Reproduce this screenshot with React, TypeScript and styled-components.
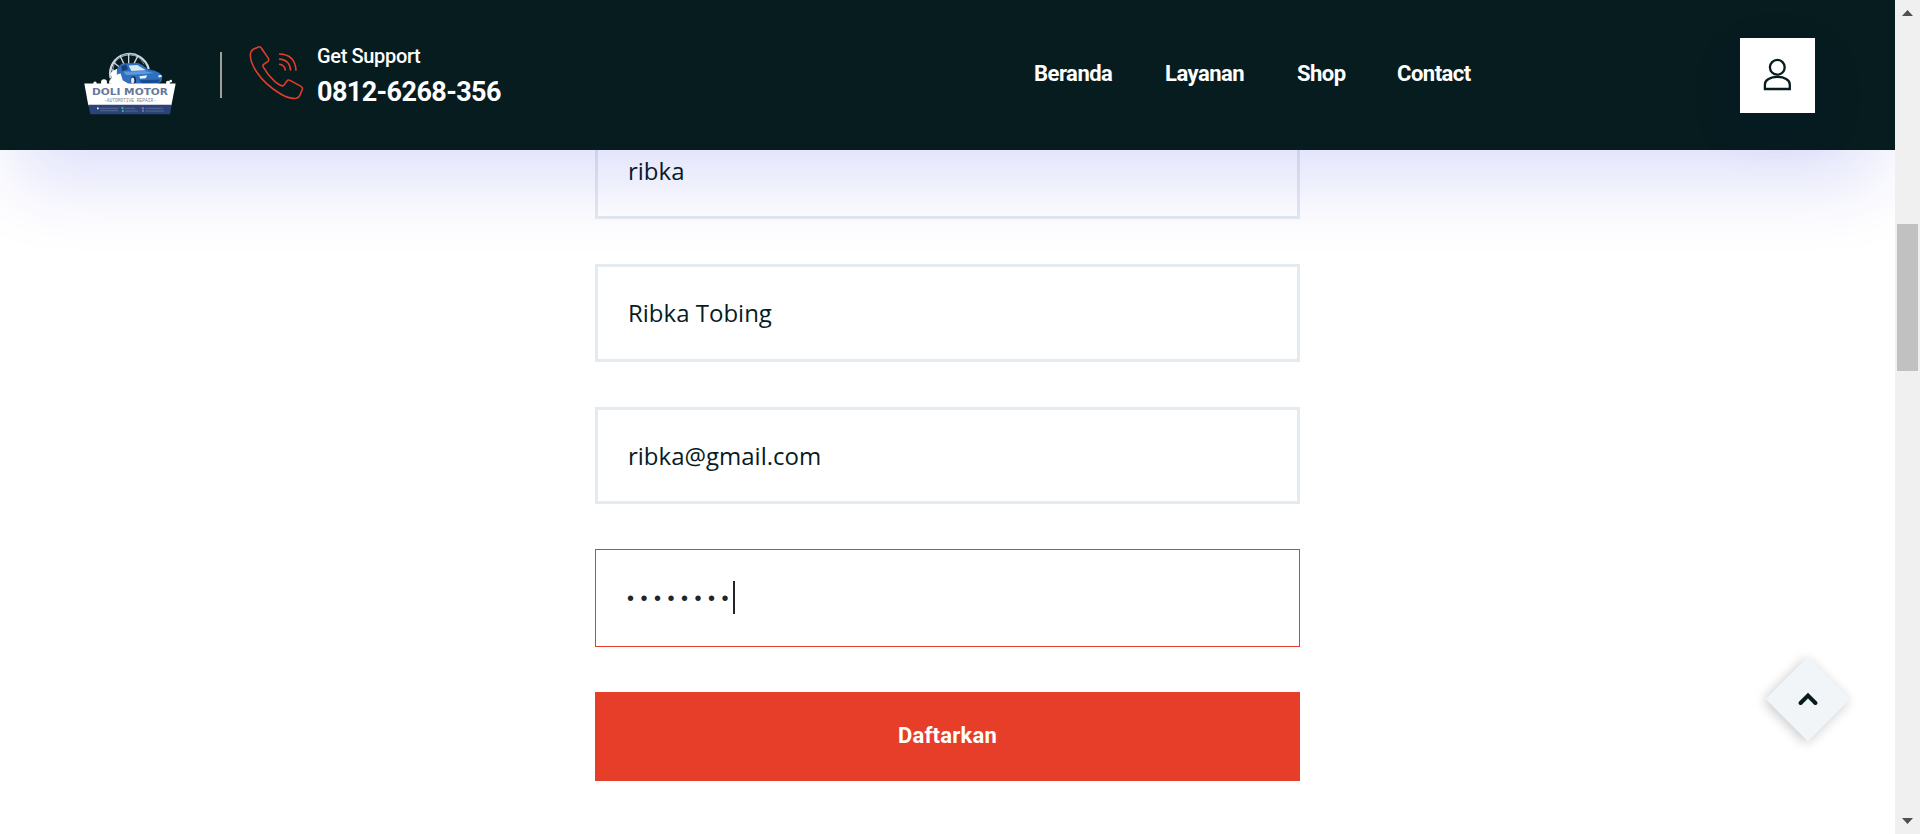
import React from 'react';
import styled, { createGlobalStyle } from 'styled-components';

const GlobalStyle = createGlobalStyle`
  *, *::before, *::after { box-sizing: border-box; }
  html, body { margin: 0; padding: 0; background: #fff; overflow: hidden; }
`;

const ink = '#071c1f';
const accent = '#e63e29';
const heading = `Roboto, "Liberation Sans", sans-serif`;

const Screen = styled.div`
  display: flex;
  width: 1920px;
  height: 834px;
  overflow: hidden;
`;

const Page = styled.div`
  position: relative;
  flex: 1;
  min-width: 0;
  overflow: hidden;
  background: #fff;
`;

const Header = styled.header`
  position: relative;
  z-index: 2;
  display: flex;
  align-items: flex-start;
  height: 150px;
  padding: 0 80px 0 84px;
  background: ${ink};
  box-shadow: 0 48px 75px -15px rgba(10, 14, 215, 0.13);
`;

const Logo = styled.svg`
  flex: none;
  width: 92px;
  height: 64px;
  margin-top: 51px;
`;

const Divider = styled.span`
  width: 2px;
  height: 46px;
  margin: 52px 26px 0 44px;
  background: #a19f9c;
`;

const PhoneIcon = styled.svg`
  flex: none;
  width: 54px;
  height: 56px;
  margin-top: 45px;
`;

const Support = styled.div`
  display: flex;
  flex-direction: column;
  margin: 44px 0 0 15px;
  width: 200px;
  color: #fff;
  font-family: ${heading};
  white-space: nowrap;
`;

const SupportLabel = styled.span`
  font-size: 20px;
  font-weight: 500;
  line-height: 24px;
  letter-spacing: -0.35px;
`;

const SupportNumber = styled.strong`
  margin-top: 8px;
  font-size: 27px;
  font-weight: 700;
  line-height: 32px;
  letter-spacing: -0.6px;
`;

const Nav = styled.nav`
  display: flex;
  gap: 52px;
  margin: 61px 0 0 517px;
`;

const NavLink = styled.a<{ $width: number }>`
  width: ${({ $width }) => $width}px;
  color: #fff;
  font: 700 22px/26px ${heading};
  letter-spacing: -0.5px;
  white-space: nowrap;
  text-decoration: none;
`;

const AccountButton = styled.button`
  display: flex;
  align-items: center;
  justify-content: center;
  width: 75px;
  height: 75px;
  margin: 38px 0 0 auto;
  padding: 0 0 4px;
  border: 0;
  background: #fff;
  box-shadow: 0 20px 60px rgba(10, 14, 120, 0.08);
`;

const Form = styled.form`
  display: flex;
  flex-direction: column;
  gap: 45px;
  width: 705px;
  margin: -29px 0 0 595px;
`;

const Field = styled.div<{ $height?: number; $active?: boolean; $drop?: number }>`
  display: flex;
  align-items: center;
  height: ${({ $height }) => $height ?? 98}px;
  padding: ${({ $drop }) => $drop ?? 0}px ${({ $active }) => ($active ? 32 : 30)}px 0;
  border: ${({ $active }) => ($active ? `1px solid ${accent}` : '3px solid #e4ebf0')};
  color: ${ink};
  font: 400 24px/36px "Open Sans", sans-serif;
`;

const Dots = styled.span`
  margin-left: -1px;
  font: 20px/30px "Liberation Sans", sans-serif;
  letter-spacing: 6.5px;
  color: #212529;
`;

const Caret = styled.span`
  width: 2px;
  height: 33px;
  margin: 0 0 1px -2px;
  background: #212529;
`;

const Submit = styled.button`
  height: 89px;
  padding: 0 0 2px;
  border: 0;
  background: ${accent};
  color: #fff;
  font: 700 22px/26px ${heading};
  letter-spacing: 0.2px;
`;

const ScrollTop = styled.a`
  position: absolute;
  left: 1778px;
  top: 669px;
  display: flex;
  align-items: center;
  justify-content: center;
  width: 60px;
  height: 60px;
  background: #f1f5f7;
  box-shadow: 0 3px 12px rgba(0, 0, 0, 0.22);
  transform: rotate(45deg);

  svg { transform: rotate(-45deg); }
`;

const Scrollbar = styled.div`
  display: flex;
  flex-direction: column;
  align-items: center;
  width: 25px;
  background: #f0f0f0;
`;

const Arrow = styled.svg`
  width: 11px;
  height: 6px;
  margin-top: 10px;
`;

const Thumb = styled.div`
  width: 21px;
  height: 147px;
  margin: 208px 0 auto;
  background: #c1c1c1;
`;

const ArrowDown = styled(Arrow)`
  margin: 0 0 10px;
`;

const links = [
  { label: 'Beranda', width: 79 },
  { label: 'Layanan', width: 80 },
  { label: 'Shop', width: 48 },
  { label: 'Contact', width: 73 },
];

function DoliLogo() {
  return (
    <Logo viewBox="42 64 276 193" preserveAspectRatio="none">
      <g fill="none" stroke="#cdd6df">
        <path d="M122 146A58 58 0 1 1 236 118" strokeWidth="7" />
        <path d="M132 140A47 47 0 0 1 222 104" stroke="#75879a" strokeWidth="3" />
        <path d="M176 72v32M150 78l14 30M130 98l28 22M204 78l-12 24M124 120l26 8" strokeWidth="4" />
      </g>
      <path d="M118 163c-3-12 6-14 8-20-8-10 0-22 8-19 3-10 14-6 17 2l18 38z" fill="#fff" />
      <path d="M144 112l12-10 44-2c16 2 24 12 32 18 22 4 40 10 45 22l-3 16-14 9-58 1-40-6-22-22c2-8-2-16 4-26z" fill="#2f6fbd" />
      <path d="M154 109l14-4 6 14-18 6z" fill="#173d74" />
      <path d="M176 108l26-2 26 16-44 2z" fill="#d5e6f6" />
      <path d="M160 126l26 0 38-2 28 6-34 4-50 2z" fill="#5a9ae0" />
      <path d="M208 140l24-3-5 9-16 2zM264 138l10-2 1 6-8 2z" fill="#eef7ff" />
      <path d="M208 152l62-2-4 10-50 3z" fill="#174a94" />
      <ellipse cx="190" cy="152" rx="8" ry="12" fill="#12294c" />
      <ellipse cx="188" cy="153" rx="5" ry="9" fill="#dfe9f2" />
      <g fill="#fff">
        <circle cx="75" cy="161" r="5" />
        <circle cx="102" cy="158" r="9" />
        <circle cx="294" cy="160" r="6" />
        <circle cx="302" cy="155" r="4" />
        <path d="M126 164l10-28 16-4 6 20 20 12z" />
        <path d="M43 162h274l-13 66H55z" />
      </g>
      <path d="M55 226h250l-5 29H61z" fill="#2b4378" />
      <text x="66" y="196" textLength="228" lengthAdjust="spacingAndGlyphs" fontFamily="DejaVu Sans, sans-serif" fontWeight="700" fontSize="25" fill="#66769b">DOLI MOTOR</text>
      <text x="102" y="217" textLength="156" lengthAdjust="spacingAndGlyphs" fontFamily="Liberation Mono, monospace" fontSize="14" fill="#7c8496">-AUTOMOTIVE REPAIR-</text>
      <path d="M90 237h54M90 244h54M165 237h30M165 245h38M226 237h52M226 245h56" stroke="#5f719d" strokeWidth="2.5" />
      <path d="M81 237h5" stroke="#fff" strokeWidth="5" />
      <path d="M154 236h7" stroke="#3ea862" strokeWidth="7" />
      <path d="M156 245h5" stroke="#6fb6e6" strokeWidth="5" />
      <path d="M215 237h7" stroke="#c05a86" strokeWidth="6" />
      <path d="M216 245h6" stroke="#4a91d8" strokeWidth="5" />
    </Logo>
  );
}

function SupportPhone() {
  return (
    <PhoneIcon viewBox="535 45 162 168" overflow="visible" fill="none" stroke={accent} strokeWidth="4.6" strokeLinecap="round" strokeLinejoin="round">
      <path d="M567 51q5-2 8 3l21 31q3 5-1 9l-14 10q-3 3 1 9 12 22 33 41 10 9 21 13 5 2 8-3l8-11q3-5 9-2l33 18q6 3 4 9l-7 17q-3 8-11 10-21 2-47-13-47-28-72-66-23-36-18-58 2-7 9-11z" />
      <path d="M628 103q17 1 19 19M628 87q33 2 35 35M628 72q49 1 51 50" strokeLinecap="butt" />
    </PhoneIcon>
  );
}

export default function App() {
  return (
    <>
      <GlobalStyle />
      <Screen>
        <Page>
          <Header>
            <DoliLogo />
            <Divider />
            <SupportPhone />
            <Support>
              <SupportLabel>Get Support</SupportLabel>
              <SupportNumber>0812-6268-356</SupportNumber>
            </Support>
            <Nav>
              {links.map((l) => (
                <NavLink key={l.label} $width={l.width}>{l.label}</NavLink>
              ))}
            </Nav>
            <AccountButton type="button" aria-label="Account">
              <svg width="30" height="34" viewBox="0 0 30 34" fill="none" stroke={ink} strokeWidth="2.3">
                <circle cx="14.3" cy="10.3" r="7.4" />
                <path d="M1.9 32v-4.6C1.9 22.8 7.4 19.9 14.3 19.9S26.8 22.8 26.8 27.4V32z" />
              </svg>
            </AccountButton>
          </Header>
          <Form>
            <Field $drop={2}>ribka</Field>
            <Field>Ribka Tobing</Field>
            <Field $height={97}>ribka@gmail.com</Field>
            <Field $active>
              <Dots>••••••••</Dots>
              <Caret />
            </Field>
            <Submit type="button">Daftarkan</Submit>
          </Form>
          <ScrollTop>
            <svg width="20" height="14" viewBox="0 0 20 14" fill="none" stroke={ink} strokeWidth="4" strokeLinecap="round">
              <path d="M2.6 11L10 3.6 17.4 11" />
            </svg>
          </ScrollTop>
        </Page>
        <Scrollbar>
          <Arrow viewBox="0 0 11 6"><path d="M0 6L5.5 0 11 6z" fill="#505050" /></Arrow>
          <Thumb />
          <ArrowDown viewBox="0 0 11 6"><path d="M0 0L5.5 6 11 0z" fill="#505050" /></ArrowDown>
        </Scrollbar>
      </Screen>
    </>
  );
}
